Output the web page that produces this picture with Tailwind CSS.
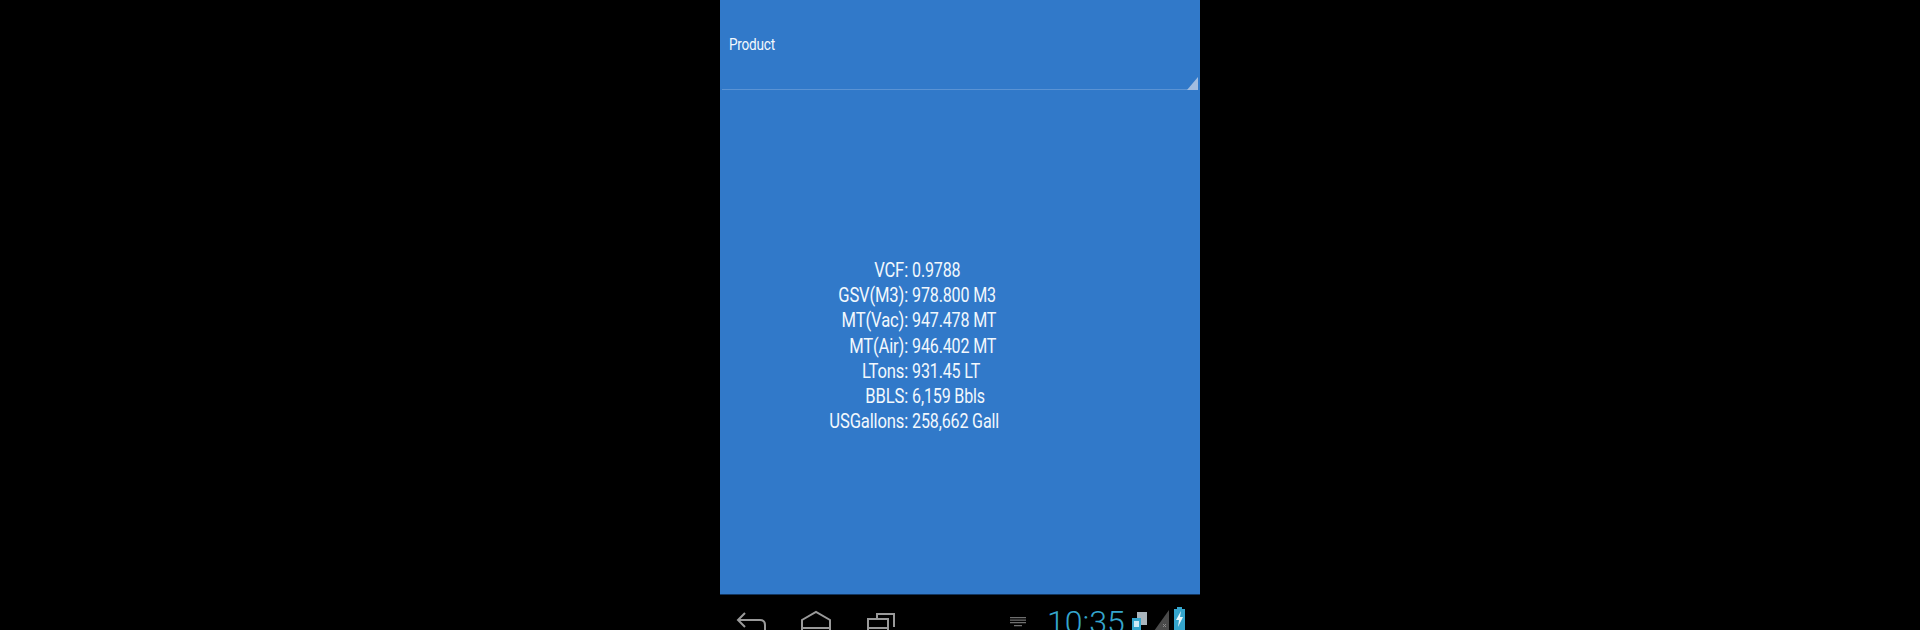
<!DOCTYPE html>
<html lang="en">
<head>
    <meta charset="UTF-8">
    <title>Product</title>
    <script src="https://cdn.jsdelivr.net/npm/@tailwindcss/browser@4"></script>
</head>
<body class="bg-black w-[1920px] h-[630px] overflow-hidden font-['Roboto',sans-serif]">
    <div class="w-[480px] h-[630px] mx-auto flex flex-col">
        <!-- app area -->
        <div class="h-[595px] bg-[#3179c9] flex flex-col text-[#f2f8fd]">
            <div class="relative h-[90px] pl-[9px] pt-[33px]">
                <div class="text-[17px] leading-[22px] tracking-[-0.3px] origin-left scale-x-[.8]">Product</div>
                <div class="absolute left-[2px] right-[12px] bottom-0 h-px bg-[#5a93d4]"></div>
                <svg class="absolute right-[2px] bottom-0 w-[11px] h-[13px]" viewBox="0 0 11 13"><path d="M11 0V13H0Z" fill="#a3bde0"/></svg>
            </div>
            <div class="grid grid-cols-[188px_1fr] gap-x-[4px] mt-[168px] text-[21px] leading-[25.2px]">
                <div class="text-right origin-right scale-x-[.79] tracking-[-0.2px]">
                    <div>VCF:</div><div>GSV(M3):</div><div>MT(Vac):</div><div>MT(Air):</div><div>LTons:</div><div>BBLS:</div><div>USGallons:</div>
                </div>
                <div class="origin-left scale-x-[.765] tracking-[-0.2px]">
                    <div>0.9788</div><div>978.800 M3</div><div>947.478 MT</div><div>946.402 MT</div><div>931.45 LT</div><div>6,159 Bbls</div><div>258,662 Gall</div>
                </div>
            </div>
        </div>
        <!-- android nav bar -->
        <div class="relative flex-1 border-t border-[#12355e] -mt-px overflow-hidden">
            <div class="flex items-start pl-[16px] pt-[15px]">
                <svg class="w-[32px] h-[20px]" viewBox="0 0 32 20" fill="none" stroke="#9a9a9a" stroke-width="2"><path d="M9 3 2 10l7 7M2 10h22c3 0 5 2 5 5v6"/></svg>
                <svg class="w-[32px] h-[20px] ml-[32px]" viewBox="0 0 32 20" fill="none" stroke="#9a9a9a" stroke-width="2"><path d="M2 21V10L16 2l14 8v11M2 18h28"/></svg>
                <svg class="w-[30px] h-[20px] ml-[34px]" viewBox="0 0 30 20" fill="none" stroke="#9a9a9a" stroke-width="2"><path d="M11 8V4h17v13M2 21V9h20v12M2 18h20"/></svg>
            </div>
            <div class="absolute left-[290px] top-[8px] flex items-start">
                <svg class="w-[16px] h-[10px] mt-[14px]" viewBox="0 0 16 10" fill="#6f6f6f"><path d="M0 0h16v1.200H0zM0 2.500h16v1.200H0zM0 5h16v1.200H0zM4 8h8v1.200H4z"/></svg>
                <div class="ml-[21px] -mt-[1px] text-[32px] leading-[40px] font-light text-[#35a5cd]">10:35</div>
                <svg class="w-[18px] h-[20px] ml-[6px] mt-[8px]" viewBox="0 0 18 20"><rect x="6" y="1" width="10" height="13" fill="#a9b4bc"/><rect x="1" y="7" width="9" height="13" fill="#35a5cd"/><rect x="3" y="10" width="5" height="6" fill="#cdeaf6"/></svg>
                <svg class="w-[16px] h-[22px] ml-[5px] mt-[6px]" viewBox="0 0 16 22"><path d="M15 1V22H0Z" fill="#4a4a4a"/><path d="M9 15l3 3M12 15l-3 3" stroke="#8a8a8a"/></svg>
                <svg class="w-[11px] h-[23px] ml-[4px] mt-[4px]" viewBox="0 0 11 23"><path d="M3 0h5v2h3v21H0V2h3z" fill="#35a5cd"/><path d="M7 4 2 13h3l-1 7 5-10H6z" fill="#e8f7fc"/></svg>
            </div>
        </div>
    </div>
</body>
</html>
